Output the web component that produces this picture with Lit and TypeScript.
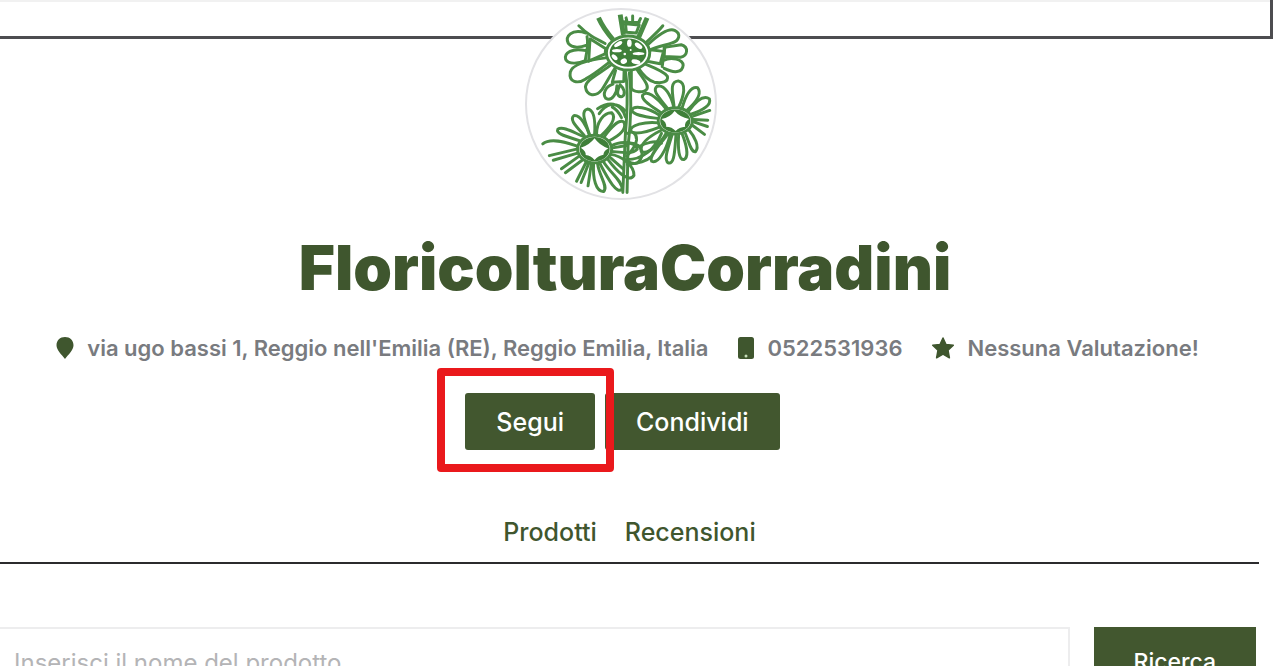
import { LitElement, html, css, svg } from "lit";
import { customElement, property } from "lit/decorators.js";

@customElement("flower-logo")
class FlowerLogo extends LitElement {
  static styles = css`
    :host { display: block; }
    svg { display: block; width: 100%; height: 100%; }
    .line { fill: none; stroke: #4a8c45; stroke-width: 9; stroke-linecap: round; stroke-linejoin: round; }
    .bold { stroke-width: 15; }
    .disc { fill: #fff; }
    .dark { fill: #3f8039; }
    .white { fill: #fff; }
  `;

  render() {
    return html`<svg viewBox="30 24 573 573" role="img" aria-label="FloricolturaCorradini">
      ${svg`
      <g class="line">
        <!-- stem -->
        <path d="M328 200 C340 260 336 330 330 400 L322 580 M342 215 C350 290 345 380 338 440 L335 580"/>
        <path d="M336 400 C350 390 365 400 364 420 C360 445 345 455 334 470 M334 430 C360 425 385 440 380 470 C370 500 350 495 332 480"/>
        <path d="M335 480 C380 480 420 450 440 400 M336 495 C370 490 390 488 410 470 M372 440 C390 430 420 420 440 430"/>
        <path d="M250 340 C270 310 300 300 328 330 M245 325 C275 305 315 300 330 350 M290 320 C300 325 312 340 318 352"/>
        <!-- top flower -->
        <path class="bold" stroke-linecap="butt" d="M248 48 C260 75 275 95 292 114 M314 38 L324 100 M396 48 L370 108"/>
        <path d="M320 60 L372 62 M335 60 L332 48 M352 60 L352 42 M370 62 L376 50"/>
        <path d="M330 66 L372 70 L363 94 L333 92 Z M188 72 C215 100 240 112 268 126 M444 72 C430 90 408 108 392 124"/>
        <path d="M400 128 C430 100 460 78 480 86 C500 96 496 118 470 125 C448 132 426 136 404 146"/>
        <path d="M222 112 L270 142 L268 158 L218 180 Z M210 94 C165 80 145 105 156 126 C168 142 195 138 210 132"/>
        <path d="M210 148 C168 138 142 155 148 175 C158 192 190 186 208 178 M213 105 C218 130 212 155 207 180"/>
        <path d="M270 170 C230 175 170 185 162 213 C156 245 185 250 209 234 C235 220 262 198 280 184"/>
        <path d="M288 190 C250 220 210 235 208 258 C212 288 240 290 259 266 C273 245 286 218 299 200"/>
        <path d="M406 145 L446 150 L436 188 L396 180 Z M448 138 L500 130 C524 137 520 164 498 168 L448 166 Z"/>
        <path d="M446 178 C470 165 505 175 506 192 C504 216 478 217 448 202 M450 140 L442 196"/>
        <path d="M388 188 C405 195 446 210 458 226 C462 244 440 248 418 244 C398 238 378 214 370 202"/>
        <path d="M348 210 L348 260 C350 276 388 278 396 264 C402 250 376 225 366 206"/>
        <path d="M300 208 L290 244 L325 242 L326 208 M292 250 C268 258 260 280 270 293 C290 305 305 275 304 255 M314 252 C302 275 304 290 320 288 C332 280 326 262 314 252"/>
        <!-- right flower -->
        <path d="M442 340 C415 320 378 300 382 284 C394 268 420 283 456 328"/>
        <path d="M460 326 C434 292 410 270 426 257 C448 247 470 286 477 319"/>
        <path d="M478 316 C472 270 466 242 491 240 C518 246 508 286 492 321"/>
        <path d="M503 322 C514 284 530 256 550 261 C564 278 545 305 518 329"/>
        <path d="M524 331 C543 305 568 282 586 295 C592 312 568 330 532 341"/>
        <path d="M538 347 L587 330 M538 358 L581 360 M540 366 L580 379 M535 376 L571 403"/>
        <path d="M434 345 C400 322 354 312 350 330 C354 346 396 350 432 355"/>
        <path d="M432 368 C390 363 342 375 346 394 C364 407 406 392 436 380"/>
        <path d="M442 389 C410 405 372 430 378 455 C400 466 438 430 455 398"/>
        <path d="M459 403 C430 438 400 472 410 485 C430 494 454 452 466 405"/>
        <path d="M472 405 C460 445 446 480 460 490 C480 496 480 452 484 406"/>
        <path d="M492 406 C490 445 492 481 508 480 C526 472 514 430 503 402"/>
        <path d="M513 401 C525 430 530 459 544 456 C556 440 542 411 523 389"/>
        <!-- left flower -->
        <path d="M190 422 C152 410 116 402 124 387 C140 375 180 402 204 410"/>
        <path d="M205 407 C180 378 158 358 173 346 C194 343 213 382 220 404"/>
        <path d="M220 402 C208 366 192 331 214 326 C238 328 238 374 236 403"/>
        <path d="M242 402 C242 366 264 336 288 337 C306 354 280 384 256 407"/>
        <path d="M264 412 C285 382 311 356 325 365 C337 390 306 410 278 424"/>
        <path d="M78 432 C94 418 132 420 181 438 M98 468 L181 448 M110 482 L184 460 M135 508 L188 470 M147 520 L198 482 M181 546 L210 488 M195 550 L218 492"/>
        <path d="M287 438 C319 420 362 427 366 448 C350 465 319 458 289 455"/>
        <path d="M285 464 C317 468 357 497 356 528 C340 554 300 511 277 480"/>
        <path d="M264 488 C286 523 320 544 320 570 C304 586 280 545 252 492"/>
        <path d="M245 492 C250 532 278 560 264 577 C240 579 230 537 233 493 M216 560 L226 493 M286 445 L334 437 M284 474 L324 509"/>
        <!-- flower rings -->
        <ellipse class="disc" cx="338" cy="155" rx="66" ry="52"/>
        <ellipse class="disc" cx="482" cy="362" rx="52" ry="40"/>
        <ellipse class="disc" cx="236" cy="448" rx="52" ry="42"/>
      </g>
      <ellipse class="dark" cx="338" cy="154" rx="56" ry="43"/>
      <g class="white">
        <ellipse cx="308" cy="128" rx="14" ry="6" transform="rotate(-32 308 128)"/>
        <ellipse cx="342" cy="125" rx="7" ry="11"/>
        <ellipse cx="370" cy="133" rx="13" ry="7" transform="rotate(35 370 133)"/>
        <ellipse cx="370" cy="157" rx="18" ry="5"/>
        <ellipse cx="362" cy="182" rx="14" ry="7" transform="rotate(15 362 182)"/>
        <ellipse cx="325" cy="180" rx="10" ry="8" transform="rotate(-20 325 180)"/>
        <ellipse cx="297" cy="168" rx="11" ry="6" transform="rotate(45 297 168)"/>
        <ellipse cx="304" cy="148" rx="15" ry="5"/>
        <circle cx="328" cy="158" r="4"/>
        <circle cx="346" cy="146" r="3"/>
      </g>
      <ellipse class="dark" cx="482" cy="362" rx="46" ry="35"/>
      <ellipse class="dark" cx="236" cy="448" rx="46" ry="37"/>
      <path class="white" d="M440 356 Q466 352 480 332 Q496 351 524 356 Q509 366 512 380 Q494 381 483 393 Q472 380 454 380 Q456 366 440 356 Z M194 444 Q220 436 236 415 Q250 436 278 446 Q263 454 263 465 Q247 468 236 481 Q225 468 209 466 Q210 454 194 444 Z"/>
      `}
    </svg>`;
  }
}

@customElement("fact-icon")
class FactIcon extends LitElement {
  @property() name = "";
  static styles = css`
    :host { display: block; }
    svg { display: block; height: 24px; fill: #3f562e; }
    .hole { fill: #c5ddb7; }
  `;
  render() {
    if (this.name === "pin")
      return html`<svg viewBox="0 0 20 24"><path d="M10 1 C15 1 18.500 4.500 18.500 9.300 C18.500 14 13.500 18.500 10 23 C6.500 18.500 1.500 14 1.500 9.300 C1.500 4.500 5 1 10 1 Z"/></svg>`;
    if (this.name === "phone")
      return html`<svg viewBox="0 0 18 24"><rect x="1" y="1" width="16" height="22" rx="2.500"/><circle class="hole" cx="9" cy="20" r="1.500"/></svg>`;
    return html`<svg viewBox="0 0 24 24"><path stroke="#3f562e" stroke-width="1.500" stroke-linejoin="round" d="M12 2 L15 8.500 L22.300 9.300 L17 14.200 L18.400 21.800 L12 18.200 L5.600 21.800 L7 14.200 L1.700 9.300 L9 8.500 Z"/></svg>`;
  }
}

@customElement("app-root")
class AppRoot extends LitElement {
  static styles = css`
    :host {
      display: block;
      max-height: 100vh;
      overflow: hidden;
      background: #fff;
      color: #3f562e;
      font-family: Inter, "Liberation Sans", sans-serif;
      font-weight: 500;
    }
    * { box-sizing: border-box; }
    .banner {
      height: 39px;
      margin-right: 7px;
      border: solid #4d4d50;
      border-width: 0 3px 3px 0;
      box-shadow: inset 0 2px #f1f1f1;
    }
    .profile {
      display: flex;
      flex-direction: column;
      align-items: center;
      margin-right: 30px;
    }
    .avatar {
      position: relative;
      width: 192px;
      height: 192px;
      margin: -31px 8px 0 0;
      border: 2px solid #e2e2e5;
      border-radius: 50%;
      background: #fff;
      overflow: hidden;
    }
    flower-logo { height: 100%; }
    h1 {
      margin: 32px 0 0;
      font: 900 62px/72px Inter, sans-serif;
    }
    .facts {
      display: flex;
      justify-content: center;
      gap: 29px;
      margin: 28px 0 0 4px;
      padding: 0;
      list-style: none;
      color: #797b7f;
      font-size: 22px;
      font-weight: 600;
      line-height: 32px;
      white-space: nowrap;
    }
    .facts li { display: flex; align-items: center; gap: 12px; }
    .actions { display: flex; gap: 10px; margin: 29px 5px 0 0; }
    button {
      border: 0;
      background: #42572f;
      color: #fff;
      font: 500 25px/32px Inter, sans-serif;
    }
    .actions button { height: 57px; padding: 0 31px; border-radius: 3px; }
    .spot { position: relative; display: flex; }
    .spot::after {
      content: "";
      position: absolute;
      z-index: 1;
      inset: -25px -19px -22px -28px;
      border: 8px solid #ea191c;
      border-radius: 4px;
      pointer-events: none;
    }
    nav {
      display: flex;
      justify-content: center;
      gap: 28px;
      margin: 66px 21px 0 0;
      padding-bottom: 14px;
      border-bottom: 2px solid #2b2b2d;
      font-size: 25px;
      line-height: 32px;
    }
    a { color: inherit; text-decoration: none; }
    .search { display: flex; gap: 24px; margin: 63px 24px 0 0; }
    input {
      flex: 1;
      min-width: 0;
      height: 70px;
      padding: 0 14px;
      border: 2px solid #ededee;
      border-left: 0;
      border-radius: 0;
      background: #fff;
      font: 400 24px/32px Inter, sans-serif;
    }
    input::placeholder { color: #b4b4b6; opacity: 1; }
    .search button { padding: 0 40px; font-size: 23px; }
  `;

  render() {
    return html`
      <div class="banner"></div>
      <header class="profile">
        <div class="avatar"><flower-logo></flower-logo></div>
        <h1>FloricolturaCorradini</h1>
        <ul class="facts">
          <li><fact-icon name="pin"></fact-icon>via ugo bassi 1, Reggio nell'Emilia (RE), Reggio Emilia, Italia</li>
          <li><fact-icon name="phone"></fact-icon>0522531936</li>
          <li><fact-icon name="star"></fact-icon>Nessuna Valutazione!</li>
        </ul>
        <div class="actions">
          <div class="spot"><button type="button">Segui</button></div>
          <button type="button">Condividi</button>
        </div>
      </header>
      <nav><a href="#prodotti">Prodotti</a><a href="#recensioni">Recensioni</a></nav>
      <form class="search">
        <input type="search" aria-label="Inserisci il nome del prodotto" placeholder="Inserisci il nome del prodotto" />
        <button type="button">Ricerca</button>
      </form>
    `;
  }
}
